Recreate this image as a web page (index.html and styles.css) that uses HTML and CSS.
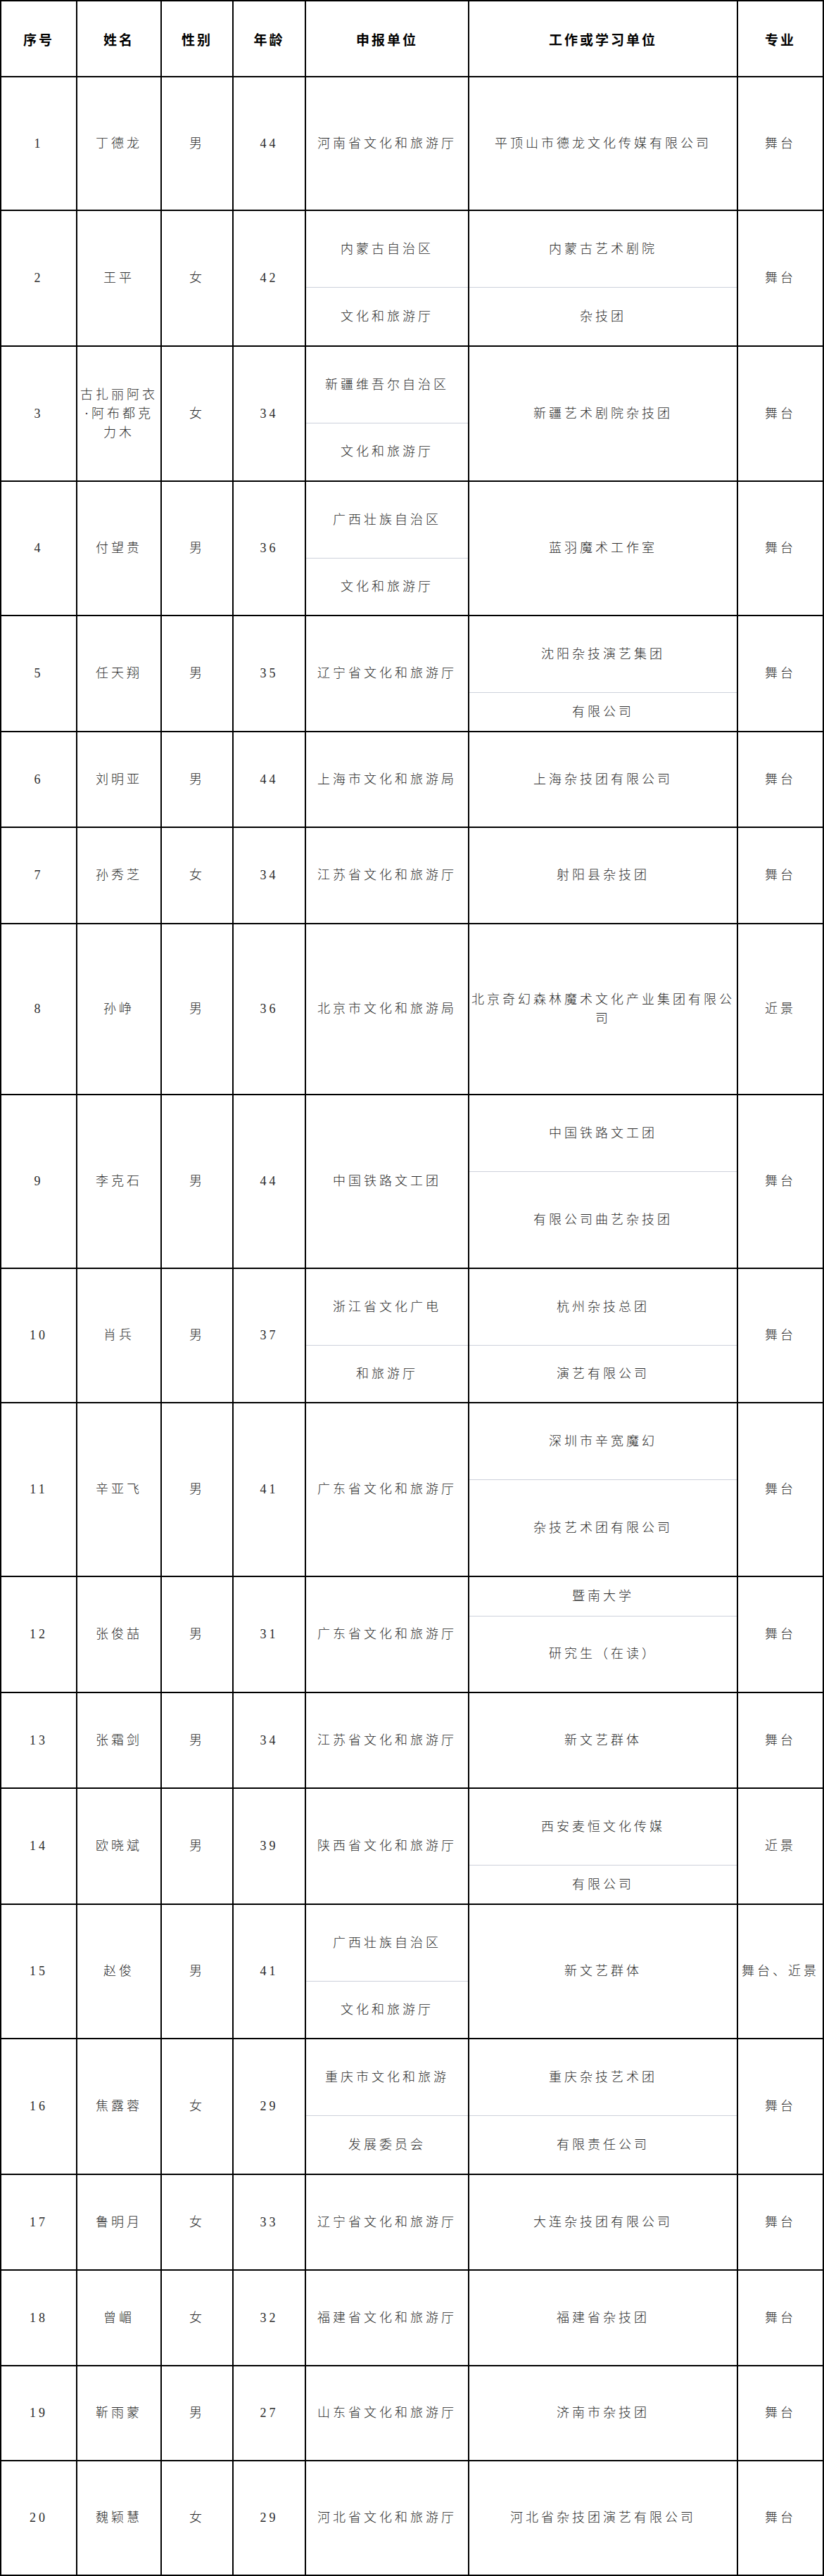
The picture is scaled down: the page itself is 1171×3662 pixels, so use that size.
FILE: index.html
```html
<!DOCTYPE html>
<html lang="zh-CN">
<head>
<meta charset="utf-8">
<title>名单</title>
<link rel="stylesheet" href="styles.css">
</head>
<body>
<div class="table">
  <div class="cell head">序号</div>
  <div class="cell head">姓名</div>
  <div class="cell head">性别</div>
  <div class="cell head">年龄</div>
  <div class="cell head">申报单位</div>
  <div class="cell head">工作或学习单位</div>
  <div class="cell head">专业</div>

  <div class="cell">1</div>
  <div class="cell">丁德龙</div>
  <div class="cell">男</div>
  <div class="cell">44</div>
  <div class="cell">河南省文化和旅游厅</div>
  <div class="cell">平顶山市德龙文化传媒有限公司</div>
  <div class="cell">舞台</div>

  <div class="cell">2</div>
  <div class="cell">王平</div>
  <div class="cell">女</div>
  <div class="cell">42</div>
  <div class="cell split"><div class="sub top">内蒙古自治区</div><div class="sub bottom">文化和旅游厅</div></div>
  <div class="cell split"><div class="sub top">内蒙古艺术剧院</div><div class="sub bottom">杂技团</div></div>
  <div class="cell">舞台</div>

  <div class="cell">3</div>
  <div class="cell">古扎丽阿衣<br>·阿布都克<br>力木</div>
  <div class="cell">女</div>
  <div class="cell">34</div>
  <div class="cell split"><div class="sub top">新疆维吾尔自治区</div><div class="sub bottom">文化和旅游厅</div></div>
  <div class="cell">新疆艺术剧院杂技团</div>
  <div class="cell">舞台</div>

  <div class="cell">4</div>
  <div class="cell">付望贵</div>
  <div class="cell">男</div>
  <div class="cell">36</div>
  <div class="cell split"><div class="sub top">广西壮族自治区</div><div class="sub bottom">文化和旅游厅</div></div>
  <div class="cell">蓝羽魔术工作室</div>
  <div class="cell">舞台</div>

  <div class="cell">5</div>
  <div class="cell">任天翔</div>
  <div class="cell">男</div>
  <div class="cell">35</div>
  <div class="cell">辽宁省文化和旅游厅</div>
  <div class="cell split"><div class="sub top">沈阳杂技演艺集团</div><div class="sub bottom">有限公司</div></div>
  <div class="cell">舞台</div>

  <div class="cell">6</div>
  <div class="cell">刘明亚</div>
  <div class="cell">男</div>
  <div class="cell">44</div>
  <div class="cell">上海市文化和旅游局</div>
  <div class="cell">上海杂技团有限公司</div>
  <div class="cell">舞台</div>

  <div class="cell">7</div>
  <div class="cell">孙秀芝</div>
  <div class="cell">女</div>
  <div class="cell">34</div>
  <div class="cell">江苏省文化和旅游厅</div>
  <div class="cell">射阳县杂技团</div>
  <div class="cell">舞台</div>

  <div class="cell">8</div>
  <div class="cell">孙峥</div>
  <div class="cell">男</div>
  <div class="cell">36</div>
  <div class="cell">北京市文化和旅游局</div>
  <div class="cell">北京奇幻森林魔术文化产业集团有限公<br>司</div>
  <div class="cell">近景</div>

  <div class="cell">9</div>
  <div class="cell">李克石</div>
  <div class="cell">男</div>
  <div class="cell">44</div>
  <div class="cell">中国铁路文工团</div>
  <div class="cell split"><div class="sub top">中国铁路文工团</div><div class="sub bottom">有限公司曲艺杂技团</div></div>
  <div class="cell">舞台</div>

  <div class="cell">10</div>
  <div class="cell">肖兵</div>
  <div class="cell">男</div>
  <div class="cell">37</div>
  <div class="cell split"><div class="sub top">浙江省文化广电</div><div class="sub bottom">和旅游厅</div></div>
  <div class="cell split"><div class="sub top">杭州杂技总团</div><div class="sub bottom">演艺有限公司</div></div>
  <div class="cell">舞台</div>

  <div class="cell">11</div>
  <div class="cell">辛亚飞</div>
  <div class="cell">男</div>
  <div class="cell">41</div>
  <div class="cell">广东省文化和旅游厅</div>
  <div class="cell split"><div class="sub top">深圳市辛宽魔幻</div><div class="sub bottom">杂技艺术团有限公司</div></div>
  <div class="cell">舞台</div>

  <div class="cell">12</div>
  <div class="cell">张俊喆</div>
  <div class="cell">男</div>
  <div class="cell">31</div>
  <div class="cell">广东省文化和旅游厅</div>
  <div class="cell split"><div class="sub top short">暨南大学</div><div class="sub bottom">研究生（在读）</div></div>
  <div class="cell">舞台</div>

  <div class="cell">13</div>
  <div class="cell">张霜剑</div>
  <div class="cell">男</div>
  <div class="cell">34</div>
  <div class="cell">江苏省文化和旅游厅</div>
  <div class="cell">新文艺群体</div>
  <div class="cell">舞台</div>

  <div class="cell">14</div>
  <div class="cell">欧晓斌</div>
  <div class="cell">男</div>
  <div class="cell">39</div>
  <div class="cell">陕西省文化和旅游厅</div>
  <div class="cell split"><div class="sub top">西安麦恒文化传媒</div><div class="sub bottom">有限公司</div></div>
  <div class="cell">近景</div>

  <div class="cell">15</div>
  <div class="cell">赵俊</div>
  <div class="cell">男</div>
  <div class="cell">41</div>
  <div class="cell split"><div class="sub top">广西壮族自治区</div><div class="sub bottom">文化和旅游厅</div></div>
  <div class="cell">新文艺群体</div>
  <div class="cell">舞台、近景</div>

  <div class="cell">16</div>
  <div class="cell">焦露蓉</div>
  <div class="cell">女</div>
  <div class="cell">29</div>
  <div class="cell split"><div class="sub top">重庆市文化和旅游</div><div class="sub bottom">发展委员会</div></div>
  <div class="cell split"><div class="sub top">重庆杂技艺术团</div><div class="sub bottom">有限责任公司</div></div>
  <div class="cell">舞台</div>

  <div class="cell">17</div>
  <div class="cell">鲁明月</div>
  <div class="cell">女</div>
  <div class="cell">33</div>
  <div class="cell">辽宁省文化和旅游厅</div>
  <div class="cell">大连杂技团有限公司</div>
  <div class="cell">舞台</div>

  <div class="cell">18</div>
  <div class="cell">曾嵋</div>
  <div class="cell">女</div>
  <div class="cell">32</div>
  <div class="cell">福建省文化和旅游厅</div>
  <div class="cell">福建省杂技团</div>
  <div class="cell">舞台</div>

  <div class="cell">19</div>
  <div class="cell">靳雨蒙</div>
  <div class="cell">男</div>
  <div class="cell">27</div>
  <div class="cell">山东省文化和旅游厅</div>
  <div class="cell">济南市杂技团</div>
  <div class="cell">舞台</div>

  <div class="cell">20</div>
  <div class="cell">魏颖慧</div>
  <div class="cell">女</div>
  <div class="cell">29</div>
  <div class="cell">河北省文化和旅游厅</div>
  <div class="cell">河北省杂技团演艺有限公司</div>
  <div class="cell">舞台</div>
</div>
</body>
</html>
```
FILE: styles.css
```css
html, body {
  margin: 0;
  padding: 0;
  background: #ffffff;
}

.table {
  width: 1171px;
  box-sizing: border-box;
  display: grid;
  grid-template-columns: 106px 118px 100px 101px 230px 380px 120px;
  grid-template-rows:
    106px 188px 191px 190px 189px 163px 134px 135px 241px 245px 189px
    245px 163px 134px 163px 189px 191px 134px 134px 133px 161px;
  gap: 2px;
  padding: 2px;
  background: #000000;
  font-family: "Liberation Serif", "Noto Sans CJK SC", serif;
  font-size: 18px;
  font-weight: 300;
  letter-spacing: 4px;
  line-height: 27px;
  color: #2b2b2b;
}

.cell {
  background: #ffffff;
  display: flex;
  align-items: center;
  justify-content: center;
  text-align: center;
  padding: 0 2px;
  min-width: 0;
}

.head {
  font-family: "Noto Sans CJK SC", sans-serif;
  font-weight: 700;
  font-size: 19px;
  letter-spacing: 3px;
  color: #000000;
}

.split {
  flex-direction: column;
  align-items: stretch;
  justify-content: flex-start;
  padding: 0;
}

.sub {
  display: flex;
  align-items: center;
  justify-content: center;
  padding: 0 2px;
}

.sub.top {
  flex: none;
  height: 108px;
  border-bottom: 1px solid #cdd1db;
}

.sub.top.short {
  height: 55px;
}

.sub.bottom {
  flex: 1;
}
```
